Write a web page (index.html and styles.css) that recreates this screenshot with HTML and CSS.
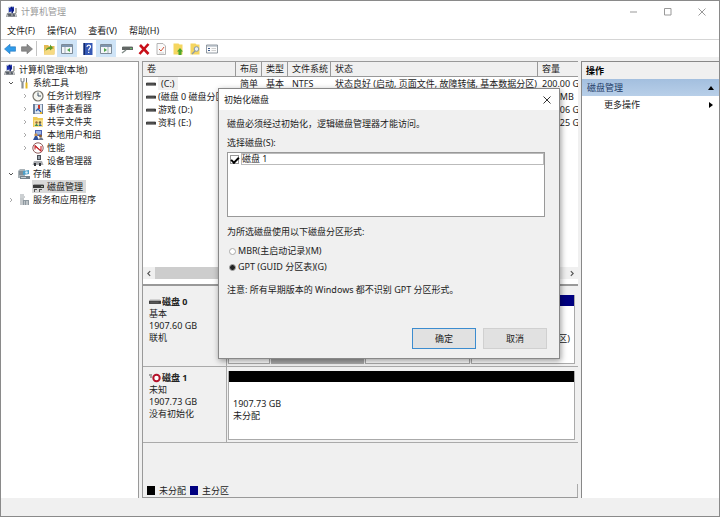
FILE: index.html
```
<!DOCTYPE html>
<html lang="zh-CN">
<head>
    <meta charset="UTF-8">
    <meta name="viewport" content="width=device-width, initial-scale=1.0">
    <title>计算机管理</title>
    <link rel="stylesheet" href="styles.css">
</head>
<body>

<!-- Shared icons -->
<svg class="icon-defs" aria-hidden="true">
    <symbol id="icon-computer" viewBox="0 0 12 12">
        <path d="M1 7h9l1 4H0z" fill="#8d9196"/>
        <path d="M2 1l6-1v6l-6 1z" fill="#b9c3d6"/>
        <path d="M3 2l5-1v4L3 6z" fill="#1c2fb0"/>
        <path d="M5 1l2 3-1 3" stroke="#0a1878" stroke-width="1.4" fill="none"/>
        <path d="M9 2h2v5H9z" fill="#b5b5ad"/>
        <path d="M2 9h3M7 9h2" stroke="#26303c"/>
        <path d="M1 11l1-2M9 8l1 3" stroke="#e8e8e8" stroke-width=".7"/>
    </symbol>
    <symbol id="icon-drive" viewBox="0 0 10 6">
        <path d="M1 1h8l1 1H0z" fill="#b4b4b4"/>
        <path d="M0 2h10v2.6H0z" fill="#3f3f3f"/>
        <path d="M1 3.2h7" stroke="#777" stroke-width=".5"/>
    </symbol>
    <symbol id="icon-disk" viewBox="0 0 12 12">
        <path d="M2 3h9l1 1H1z" fill="#9a9a9a"/>
        <path d="M1 4h11v3H1z" fill="#3b3b3b"/>
        <path d="M9 5.500h2" stroke="#9fb3a3"/>
        <path d="M2 8h3v1H3v2H2zM7 8h3v1H8v2H7z" fill="#555"/>
    </symbol>
</svg>

<div class="window">
    <header class="title-bar">
        <svg class="icon"><use href="#icon-computer"/></svg>
        <h1>计算机管理</h1>
        <div class="window-buttons">
            <button type="button" aria-label="最小化"><svg viewBox="0 0 8 8"><path d="M0 4h7"/></svg></button>
            <button type="button" aria-label="最大化"><svg viewBox="0 0 8 8"><path d="M.5.5h6.5v6.5H.5z"/></svg></button>
            <button type="button" aria-label="关闭"><svg viewBox="0 0 8 8"><path d="M.5.5l7 7M7.500.5l-7 7"/></svg></button>
        </div>
    </header>

    <nav class="menu-bar">
        <button type="button">文件(F)</button>
        <button type="button">操作(A)</button>
        <button type="button">查看(V)</button>
        <button type="button">帮助(H)</button>
    </nav>

    <div class="toolbar">
        <button type="button" aria-label="后退">
            <svg viewBox="0 0 12 12"><path d="M.5 6L6 1.200v2.600h5.500v4.400H6v2.600z" fill="#2f9bea" stroke="#2473b8" stroke-width=".6"/></svg>
        </button>
        <button type="button" aria-label="前进">
            <svg viewBox="0 0 12 12"><path d="M11.500 6L6 1.200v2.600H.5v4.400H6v2.600z" fill="#8b8b8b" stroke="#6d6d6d" stroke-width=".6"/></svg>
        </button>
        <span class="separator"></span>
        <button type="button" aria-label="上一级">
            <svg viewBox="0 0 12 12"><path d="M1 2h4l1 1h5.500v8.500H1z" fill="#e3bb52"/><path d="M2 6h10l-1 5.500H1z" fill="#f6da83"/><path d="M2.500 8c.5-3 2.500-4 4.500-4V1.500L10 5 7 7.500V6C5.500 6 4 6.500 2.500 8z" fill="#5a9a2c"/></svg>
        </button>
        <button type="button" class="active" aria-label="显示控制台树">
            <svg viewBox="0 0 12 12"><path d="M.5 1.500h11v9H.5z" fill="#f4f6f8" stroke="#7d8b98"/><path d="M1 2h10v2H1z" fill="#7f95ae"/><path d="M4 4v6" stroke="#a5b0ba"/><path d="M9 5v4L6 7z" fill="#4fa64a"/></svg>
        </button>
        <button type="button" aria-label="帮助">
            <svg viewBox="0 0 12 12"><path d="M1.500 0h9v12h-9z" fill="#3558b4"/><path d="M1.500 0H3v12H1.500z" fill="#13296a"/><path d="M5 4C5 1.500 8.500 1.500 8.500 3.800 8.500 5.400 6.700 5.500 6.700 7.400M6.700 8.700v1.300" stroke="#fff" stroke-width="1.200" fill="none"/></svg>
        </button>
        <button type="button" class="active" aria-label="显示操作窗格">
            <svg viewBox="0 0 12 12"><path d="M.5 1.500h11v9H.5z" fill="#f4f6f8" stroke="#7d8b98"/><path d="M1 2h10v2H1z" fill="#7f95ae"/><path d="M8 4v6" stroke="#a5b0ba"/><path d="M4 5v4l3-2z" fill="#4fa64a"/></svg>
        </button>
        <button type="button" aria-label="磁盘">
            <svg viewBox="0 0 12 12"><path d="M2 3h9l1 1H1z" fill="#b9bdbb"/><path d="M1 4h11v3H1z" fill="#626765"/><path d="M1 10l4-3" stroke="#7f8a86" stroke-width="1.400"/><path d="M9 5.500h2" stroke="#67c06a"/></svg>
        </button>
        <button type="button" aria-label="删除">
            <svg viewBox="0 0 12 12"><path d="M2 2l8.500 9M10.500 1L1.500 11" stroke="#c80f18" stroke-width="2.600"/></svg>
        </button>
        <button type="button" aria-label="属性">
            <svg viewBox="0 0 12 12"><path d="M2 .5h6L10.500 3v8.500H2z" fill="#fafafa" stroke="#a3a3a3" stroke-width=".8"/><path d="M4 6l2 2 3-4" stroke="#d5563a" fill="none"/><path d="M4 10h5" stroke="#bbb" stroke-width=".7"/></svg>
        </button>
        <button type="button" aria-label="新建">
            <svg viewBox="0 0 12 12"><path d="M1.500 .5h5l1 1h3v10h-9z" fill="#f5d660"/><path d="M6.500 12V8.500H5L8 5l3 3.500H9.500V12z" fill="#4ca62b"/></svg>
        </button>
        <button type="button" aria-label="查找">
            <svg viewBox="0 0 12 12"><path d="M1.500 .5h5l1 1h3v10h-9z" fill="#f5d660"/><circle cx="7.500" cy="6" r="2.300" fill="#e6f0f7" stroke="#8a9aa6"/><path d="M6 8l-3 3" stroke="#8a9aa6" stroke-width="1.300"/></svg>
        </button>
        <button type="button" aria-label="列表">
            <svg viewBox="0 0 12 12"><path d="M.5 2h11v8H.5z" fill="#fcfcfc" stroke="#77818a" stroke-width=".8"/><path d="M1 3h10" stroke="#9ba7b3"/><path d="M2 5.500h2M2 7.500h2" stroke="#3c5a8c"/><path d="M5.500 5.500H10M5.500 7.500H10" stroke="#bbb" stroke-width=".7"/></svg>
        </button>
    </div>

    <main class="panes">
        <ul class="tree">
            <li class="root">
                <div class="node"><svg class="icon"><use href="#icon-computer"/></svg>计算机管理(本地)</div>
                <ul>
                    <li>
                        <div class="node">
                            <svg class="arrow open" viewBox="0 0 6 6"><path d="M1 2l2 2 2-2"/></svg>
                            <svg class="icon" viewBox="0 0 12 12"><path d="M3 1v3l1 1v6h1V5l1-1V1" fill="none" stroke="#8b9094" stroke-width="1.200"/><path d="M8.500 1v5" stroke="#777"/><path d="M7.500 5.500h2v6h-2z" fill="#e5b921"/></svg>
                            系统工具
                        </div>
                        <ul>
                            <li><div class="node">
                                <svg class="arrow" viewBox="0 0 6 6"><path d="M2 1l2 2-2 2"/></svg>
                                <svg class="icon" viewBox="0 0 12 12"><circle cx="6" cy="6" r="5" fill="#f5f5ef" stroke="#77746c" stroke-width="1.200"/><path d="M6 2.500V6h3" stroke="#3c5066" fill="none"/></svg>
                                任务计划程序
                            </div></li>
                            <li><div class="node">
                                <svg class="arrow" viewBox="0 0 6 6"><path d="M2 1l2 2-2 2"/></svg>
                                <svg class="icon" viewBox="0 0 12 12"><path d="M1 1h10v10H1z" fill="#6b7f9b"/><path d="M3 1.500h7v9H3z" fill="#dce6f2"/><path d="M6 2h2v4H6z" fill="#cc3b2c"/><path d="M4 8l2-2 3 3" stroke="#2c5bab" stroke-width="1.300" fill="none"/><path d="M8 9h2v2H8z" fill="#e8b32c"/></svg>
                                事件查看器
                            </div></li>
                            <li><div class="node">
                                <svg class="arrow" viewBox="0 0 6 6"><path d="M2 1l2 2-2 2"/></svg>
                                <svg class="icon" viewBox="0 0 12 12"><path d="M1 1h4l1 1h5v9H1z" fill="#f1cc55"/><path d="M2 4h9v7H2z" fill="#f8e08b"/><circle cx="4.500" cy="6.500" r="1.200" fill="#9d6b3e"/><circle cx="8" cy="6.500" r="1.200" fill="#6b5a3e"/><path d="M2.500 10l2-2.500 2 2.500z" fill="#3d8c4d"/><path d="M6.500 10L8 7.500l2 2.500z" fill="#3365a5"/></svg>
                                共享文件夹
                            </div></li>
                            <li><div class="node">
                                <svg class="arrow" viewBox="0 0 6 6"><path d="M2 1l2 2-2 2"/></svg>
                                <svg class="icon" viewBox="0 0 12 12"><path d="M3 1h7v6H3z" fill="#4a62b5"/><path d="M4 2h5v3.500H4z" fill="#95b1e6"/><circle cx="4" cy="6" r="1.700" fill="#c6904f"/><path d="M1 11l2-4h2l2 4z" fill="#2d4f9a"/><circle cx="8.500" cy="7" r="1.500" fill="#8a5b31"/><path d="M6.500 11L8 8.500h2l1.500 2.500z" fill="#69758c"/></svg>
                                本地用户和组
                            </div></li>
                            <li><div class="node">
                                <svg class="arrow" viewBox="0 0 6 6"><path d="M2 1l2 2-2 2"/></svg>
                                <svg class="icon" viewBox="0 0 12 12"><circle cx="6" cy="6" r="5.200" fill="#fff" stroke="#8b5b5b"/><path d="M3 7.500V4l6 5V4" stroke="#d02128" fill="none" stroke-width="1.100"/><path d="M3 3l6 6" stroke="#a33" stroke-width=".7"/></svg>
                                性能
                            </div></li>
                            <li><div class="node">
                                <span class="arrow"></span>
                                <svg class="icon" viewBox="0 0 12 12"><path d="M5 0h4v5H5z" fill="#4c5158"/><path d="M6 1h2v3H6z" fill="#9ba5b0"/><path d="M2 6h8l1.500 4H.5z" fill="#a9acb0"/><path d="M2 8h2v3H2zM7 8h2v3H7z" fill="#2f3338"/></svg>
                                设备管理器
                            </div></li>
                        </ul>
                    </li>
                    <li>
                        <div class="node">
                            <svg class="arrow open" viewBox="0 0 6 6"><path d="M1 2l2 2 2-2"/></svg>
                            <svg class="icon" viewBox="0 0 12 12"><path d="M0 3l2-2h5v9H0z" fill="#aab3b8"/><path d="M1 4h5M1 6h5" stroke="#5f6b73"/><path d="M5 3l6-1v4l-6 1z" fill="#4d9fc8"/><circle cx="8.500" cy="4.500" r="1.300" fill="#d9eef7"/><path d="M2 8h10v3H2z" fill="#77838b"/><path d="M3 9.500h5" stroke="#dfe4e6" stroke-width=".8"/></svg>
                            存储
                        </div>
                        <ul>
                            <li><div class="node">
                                <span class="arrow"></span>
                                <span class="selected"><svg class="icon"><use href="#icon-disk"/></svg>磁盘管理</span>
                            </div></li>
                        </ul>
                    </li>
                    <li>
                        <div class="node">
                            <svg class="arrow" viewBox="0 0 6 6"><path d="M2 1l2 2-2 2"/></svg>
                            <svg class="icon" viewBox="0 0 12 12"><path d="M2 1h4M2 3h5" stroke="#9aa1a6"/><path d="M2 4h4v7H2z" fill="#c4c8cb"/><path d="M5 6h6v5H5z" fill="#8e989f"/><path d="M6 8h1M8 8h2M6 10h1M8 10h2" stroke="#eef0f1"/></svg>
                            服务和应用程序
                        </div>
                    </li>
                </ul>
            </li>
        </ul>

        <section class="content">
            <div class="volumes">
                <table>
                    <thead>
                        <tr>
                            <th class="col-name">卷</th>
                            <th class="col-small">布局</th>
                            <th class="col-small">类型</th>
                            <th class="col-fs">文件系统</th>
                            <th class="col-status">状态</th>
                            <th>容量</th>
                        </tr>
                    </thead>
                    <tbody>
                        <tr>
                            <td><svg class="drive"><use href="#icon-drive"/></svg><span class="focused">(C:)</span></td>
                            <td>简单</td>
                            <td>基本</td>
                            <td>NTFS</td>
                            <td>状态良好 (启动, 页面文件, 故障转储, 基本数据分区)</td>
                            <td>200.00 GB</td>
                        </tr>
                        <tr>
                            <td><svg class="drive"><use href="#icon-drive"/></svg>(磁盘 0 磁盘分区 1)</td>
                            <td></td>
                            <td></td>
                            <td></td>
                            <td></td>
                            <td>100 MB</td>
                        </tr>
                        <tr>
                            <td><svg class="drive"><use href="#icon-drive"/></svg>游戏 (D:)</td>
                            <td></td>
                            <td></td>
                            <td></td>
                            <td></td>
                            <td>854.06 GB</td>
                        </tr>
                        <tr>
                            <td><svg class="drive"><use href="#icon-drive"/></svg>资料 (E:)</td>
                            <td></td>
                            <td></td>
                            <td></td>
                            <td></td>
                            <td>853.25 GB</td>
                        </tr>
                    </tbody>
                </table>
                <div class="scrollbar">
                    <svg viewBox="0 0 6 6"><path d="M4 1L2 3l2 2"/></svg>
                    <div class="thumb"></div>
                    <svg viewBox="0 0 6 6"><path d="M2 1l2 2-2 2"/></svg>
                </div>
            </div>

            <div class="disk">
                <div class="disk-label">
                    <strong><svg class="disk-icon"><use href="#icon-drive"/></svg>磁盘 0</strong>
                    <span>基本</span>
                    <span>1907.60 GB</span>
                    <span>联机</span>
                </div>
                <div class="partitions">
                    <div class="partition small primary"></div>
                    <div class="partition medium primary shaded"></div>
                    <div class="partition primary"></div>
                    <div class="partition primary last">
                        <p>(主分区)</p>
                    </div>
                </div>
            </div>

            <div class="disk">
                <div class="disk-label">
                    <strong>
                        <svg class="disk-icon" viewBox="0 0 12 10"><path d="M0 2h3M1 4h2" stroke="#555"/><circle cx="7.500" cy="5" r="3.200" fill="#fff" stroke="#b5122b" stroke-width="2"/></svg>磁盘 1
                    </strong>
                    <span>未知</span>
                    <span>1907.73 GB</span>
                    <span>没有初始化</span>
                </div>
                <div class="partitions">
                    <div class="partition">
                        <p>1907.73 GB</p>
                        <p>未分配</p>
                    </div>
                </div>
            </div>

            <div class="legend">
                <span class="swatch"></span>未分配
                <span class="swatch navy"></span>主分区
            </div>
        </section>

        <aside class="actions">
            <h2>操作</h2>
            <button type="button" class="group">磁盘管理
                <svg viewBox="0 0 6 6"><path d="M0 5l3-4 3 4z"/></svg>
            </button>
            <button type="button" class="more">更多操作
                <svg viewBox="0 0 6 6"><path d="M1 0l4 3-4 3z"/></svg>
            </button>
        </aside>
    </main>

    <footer class="status-bar"></footer>
</div>

<form class="dialog" role="dialog" aria-labelledby="dialogTitle">
    <div class="dialog-title">
        <h2 id="dialogTitle">初始化磁盘</h2>
        <button type="button" aria-label="关闭"><svg viewBox="0 0 8 8"><path d="M.5.5l7 7M7.500.5l-7 7"/></svg></button>
    </div>
    <div class="dialog-body">
        <p>磁盘必须经过初始化，逻辑磁盘管理器才能访问。</p>
        <p class="list-label">选择磁盘(S):</p>
        <div class="disk-list">
            <label><input type="checkbox" checked><span>磁盘 1</span></label>
        </div>
        <p class="style-label">为所选磁盘使用以下磁盘分区形式:</p>
        <label class="choice"><input type="radio" name="style">MBR(主启动记录)(M)</label>
        <label class="choice"><input type="radio" name="style" checked>GPT (GUID 分区表)(G)</label>
        <p class="note">注意: 所有早期版本的 Windows 都不识别 GPT 分区形式。</p>
        <div class="dialog-buttons">
            <button type="button" class="default">确定</button>
            <button type="button">取消</button>
        </div>
    </div>
</form>

</body>
</html>
```
FILE: styles.css
```
* {
    box-sizing: border-box;
}

body {
    margin: 0;
    height: 100vh;
    font-family: "Noto Sans", "Noto Sans CJK SC", sans-serif;
    font-size: 9px;
    line-height: 12px;
    color: #222;
    background-color: #f0f0f0;
    overflow: hidden;
}

h1, h2, p, ul {
    margin: 0;
    padding: 0;
    font-size: 9px;
    font-weight: normal;
    list-style: none;
}

button {
    font: inherit;
    color: inherit;
    padding: 0;
    border: none;
    background: none;
}

input {
    margin: 0;
    appearance: none;
}

.icon-defs {
    display: none;
}

.icon {
    width: 12px;
    height: 12px;
    flex-shrink: 0;
}

.window {
    height: 100%;
    display: flex;
    flex-direction: column;
    border: 1px solid #8a8a8a;
}

/* Title, menu and toolbar */
.title-bar {
    display: flex;
    align-items: center;
    gap: 3px;
    height: 22px;
    padding-left: 5px;
    background-color: #fff;
    color: #999;
}

.window-buttons {
    display: flex;
    margin-left: auto;
}

.window-buttons button {
    width: 34px;
    height: 22px;
}

.window-buttons svg,
.dialog-title svg {
    width: 8px;
    height: 8px;
    display: block;
    margin: auto;
    fill: none;
    stroke: #999;
    stroke-width: 1;
}

.menu-bar {
    display: flex;
    gap: 12px;
    height: 17px;
    padding-left: 6px;
    background-color: #fff;
    border-bottom: 1px solid #d5d5d5;
}

.toolbar {
    display: flex;
    align-items: center;
    height: 17px;
    background-color: #fff;
}

.toolbar button {
    width: 17px;
    height: 17px;
}

.toolbar button.active {
    width: 20px;
    margin-right: 2px;
    background-color: #cfe4f7;
}

.toolbar svg {
    width: 12px;
    height: 12px;
    display: block;
    margin: auto;
}

.separator {
    width: 1px;
    height: 15px;
    margin: 0 3px 0 1px;
    background-color: #c4c4c4;
}

/* Panes */
.panes {
    flex: 1;
    min-height: 0;
    margin-top: 4px;
    display: grid;
    grid-template-columns: 138px minmax(0, 1fr) 138px;
    gap: 3px;
}

.tree {
    background-color: #fff;
    border: solid #999;
    border-width: 1px 1px 0 0;
    padding-top: 1px;
}

.node {
    display: flex;
    align-items: center;
    gap: 3px;
    height: 13px;
    white-space: nowrap;
    padding-left: 6px;
}

.root > .node {
    padding-left: 3px;
}

.root > ul > li > ul .node {
    padding-left: 20px;
}

.arrow {
    width: 8px;
    height: 6px;
    flex-shrink: 0;
    fill: none;
    stroke: #aaa;
    stroke-width: 1;
}

.arrow.open {
    stroke: #555;
}

.selected {
    display: flex;
    align-items: center;
    gap: 3px;
    height: 13px;
    padding-right: 3px;
    background-color: #d9d9d9;
}

.content {
    display: flex;
    flex-direction: column;
    border: solid #999;
    border-width: 1px 0 1px 1px;
}

.volumes {
    height: 224px;
    display: flex;
    flex-direction: column;
    background-color: #fff;
    overflow: hidden;
    border-bottom: 2px solid #999;
}

table {
    width: 100%;
    table-layout: fixed;
    border-collapse: separate;
    border-spacing: 0;
}

th, td {
    height: 13px;
    padding: 0 0 0 4px;
    text-align: left;
    font-weight: normal;
    white-space: nowrap;
    overflow: hidden;
}

th {
    height: 15px;
    background-color: #f0f0f0;
    border-right: 1px solid #999;
    border-bottom: 1px solid #999;
}

th:last-child {
    border-right: none;
}

.col-name {
    width: 93px;
}

.col-small {
    width: 26px;
}

.col-fs {
    width: 43px;
}

.col-status {
    width: 207px;
}

td:first-child {
    padding-left: 3px;
}

.drive {
    width: 10px;
    height: 6px;
    margin-right: 2px;
}

.focused {
    padding: 0 3px;
    background-color: #f0f0f0;
}

.scrollbar {
    margin-top: auto;
    margin-bottom: 5px;
    display: flex;
    align-items: center;
    height: 12px;
    background-color: #f0f0f0;
}

.scrollbar svg {
    width: 12px;
    height: 7px;
    fill: none;
    stroke: #555;
}

.thumb {
    width: 320px;
    height: 12px;
    margin-right: auto;
    background-color: #cdcdcd;
}

/* Disk map */
.disk {
    display: flex;
    height: 76px;
    border-bottom: 1px solid #aaa;
}

.volumes + .disk {
    height: 81px;
    padding-top: 5px;
}

.disk-label {
    width: 84px;
    padding: 5px 0 0 6px;
    display: flex;
    flex-direction: column;
    border-right: 1px solid #aaa;
}

.disk-label strong {
    display: flex;
    align-items: center;
    gap: 1px;
}

.disk-icon {
    width: 12px;
    height: 10px;
}

.partitions {
    flex: 1;
    display: flex;
    gap: 1px;
    padding: 4px 3px 2px 1px;
}

.partition {
    flex: 1;
    padding: 0 4px;
    background-color: #fff;
    border: solid #aaa;
    border-width: 0 1px 1px;
    white-space: nowrap;
}

/* Colour bar over each partition */
.partition::before {
    content: "";
    display: block;
    height: 11px;
    margin: 0 -4px 16px;
    background-color: #000;
}

.partition.primary::before {
    background-color: #000080;
}

.partition.small {
    flex: 0 0 42px;
}

.partition.medium {
    flex: 0 0 93px;
}

.partition.shaded {
    background-color: #aaa;
}

.partition.last {
    text-align: right;
}

.partition.last::before {
    margin-bottom: 27px;
}

.legend {
    margin-top: auto;
    display: flex;
    align-items: center;
    gap: 4px;
    height: 13px;
    padding-left: 4px;
    border-right: 1px solid #aaa;
}

.swatch {
    width: 8px;
    height: 9px;
    background-color: #000;
}

.swatch.navy {
    background-color: #000080;
}

/* Actions pane */
.actions {
    background-color: #fff;
    border: solid #888;
    border-width: 1px 0 0 1px;
}

.actions h2 {
    height: 17px;
    padding: 3px 4px 0;
    font-weight: bold;
    color: #000;
    background-color: #f0f0f0;
}

.actions button {
    display: flex;
    align-items: center;
    justify-content: space-between;
    width: 100%;
    height: 17px;
    padding: 0 5px;
}

.actions .group {
    color: #1e3b66;
    background: linear-gradient(#a3bfdf, #b8cfe8);
}

.actions .more {
    padding-left: 22px;
}

.actions svg {
    width: 6px;
    height: 6px;
    fill: #000;
}

.status-bar {
    height: 18px;
}

/* Initialize disk dialog, floats over the window */
.dialog {
    position: absolute;
    left: 218px;
    top: 88px;
    width: 342px;
    background-color: #f0f0f0;
    border: 1px solid #888;
    box-shadow: 1px 2px 6px rgba(0, 0, 0, 0.4);
}

.dialog-title {
    display: flex;
    align-items: center;
    justify-content: space-between;
    height: 21px;
    padding: 0 8px 0 5px;
    background-color: #fff;
}

.dialog-title svg {
    stroke: #333;
}

.dialog-body {
    padding: 8px 12px 9px 8px;
}

.list-label {
    margin-top: 7px;
}

.disk-list {
    height: 65px;
    margin: 3px 2px 0 0;
    background-color: #fff;
    border: 1px solid #999;
}

.disk-list label {
    display: flex;
    align-items: center;
    gap: 2px;
    height: 12px;
    padding-left: 2px;
}

.disk-list span {
    flex: 1;
    line-height: 10px;
    border: 1px solid #bbb;
}

.disk-list input {
    width: 9px;
    height: 9px;
    border: 1px solid #999;
    background-color: #fff;
}

.disk-list input:checked::before {
    content: "";
    display: block;
    width: 6px;
    height: 3px;
    margin-top: 1px;
    border: solid #000;
    border-width: 0 0 2px 2px;
    transform: rotate(-45deg);
}

.style-label {
    margin-top: 9px;
    margin-bottom: 5px;
}

.choice {
    display: flex;
    align-items: center;
    gap: 2px;
    height: 16px;
    padding-left: 2px;
}

.choice input {
    width: 7px;
    height: 7px;
    border: 1px solid #aaa;
    border-radius: 50%;
    background-color: #fff;
}

.choice input:checked {
    background-color: #222;
}

.note {
    margin-top: 9px;
}

.dialog-buttons {
    display: flex;
    justify-content: flex-end;
    gap: 7px;
    margin-top: 32px;
}

.dialog-buttons button {
    width: 64px;
    height: 21px;
    background-color: #e1e1e1;
    border: 1px solid #d0d0d0;
}

.dialog-buttons .default {
    border-color: #3c8ccf;
}
```
